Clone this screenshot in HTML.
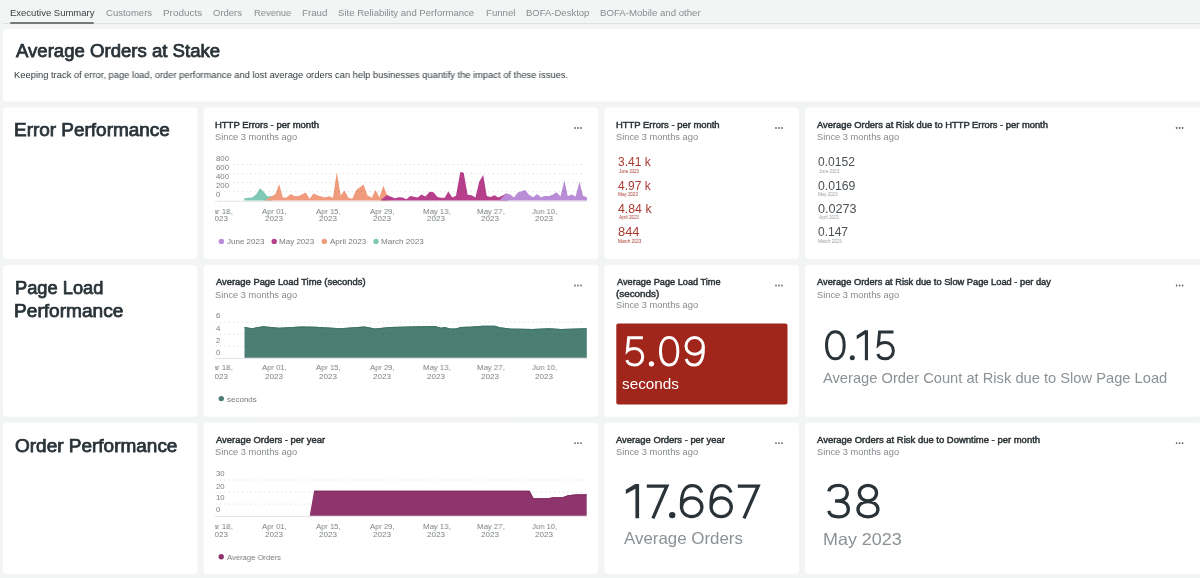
<!DOCTYPE html>
<html><head><meta charset="utf-8"><style>
html,body{margin:0;padding:0;}
body{width:1200px;height:578px;overflow:hidden;position:relative;background:#f3f4f4;font-family:"Liberation Sans",sans-serif;}
.c{position:absolute;background:#fff;border-radius:4px;}
.t{position:absolute;white-space:nowrap;line-height:1;transform-origin:0 0;will-change:transform;}
.tabline{position:absolute;left:3px;top:23px;width:1197px;height:1px;background:#dde0e1;}
.tabul{position:absolute;left:10.3px;top:22px;width:83.7px;height:2px;background:#75797c;border-radius:1px;}
svg{position:absolute;left:0;top:0;}
</style></head><body>
<div class="tabline"></div><div class="tabul"></div>
<svg width="1200" height="578" viewBox="0 0 1200 578"><rect x="3" y="29" width="1198.00" height="72.40" rx="4" fill="#fff"/><rect x="3" y="107.6" width="194.30" height="151.50" rx="4" fill="#fff"/><rect x="203.5" y="107.6" width="394.80" height="151.50" rx="4" fill="#fff"/><rect x="604.3" y="107.6" width="194.50" height="151.50" rx="4" fill="#fff"/><rect x="805" y="107.6" width="396.00" height="151.50" rx="4" fill="#fff"/><rect x="3" y="265" width="194.30" height="151.70" rx="4" fill="#fff"/><rect x="203.5" y="265" width="394.80" height="151.70" rx="4" fill="#fff"/><rect x="604.3" y="265" width="194.50" height="151.70" rx="4" fill="#fff"/><rect x="805" y="265" width="396.00" height="151.70" rx="4" fill="#fff"/><rect x="3" y="422.6" width="194.30" height="151.30" rx="4" fill="#fff"/><rect x="203.5" y="422.6" width="394.80" height="151.30" rx="4" fill="#fff"/><rect x="604.3" y="422.6" width="194.50" height="151.30" rx="4" fill="#fff"/><rect x="805" y="422.6" width="396.00" height="151.30" rx="4" fill="#fff"/></svg>
<svg width="1200" height="578" viewBox="0 0 1200 578">
<rect x="616.3" y="323.6" width="171.2" height="81" rx="2" fill="#a0251b"/>
<line x1="215" y1="201.30" x2="587" y2="201.30" stroke="#e2e4e5" stroke-width="1"/>
<line x1="220.2" y1="205.10000000000002" x2="220.2" y2="206.3" stroke="#e6e8e9" stroke-width="1"/>
<line x1="274.2" y1="205.10000000000002" x2="274.2" y2="206.3" stroke="#e6e8e9" stroke-width="1"/>
<line x1="328.2" y1="205.10000000000002" x2="328.2" y2="206.3" stroke="#e6e8e9" stroke-width="1"/>
<line x1="382.2" y1="205.10000000000002" x2="382.2" y2="206.3" stroke="#e6e8e9" stroke-width="1"/>
<line x1="436.2" y1="205.10000000000002" x2="436.2" y2="206.3" stroke="#e6e8e9" stroke-width="1"/>
<line x1="490.2" y1="205.10000000000002" x2="490.2" y2="206.3" stroke="#e6e8e9" stroke-width="1"/>
<line x1="544.2" y1="205.10000000000002" x2="544.2" y2="206.3" stroke="#e6e8e9" stroke-width="1"/>
<path d="M244.3,200.4 L244.3,198.3 L252.1,197.4 L256,194.4 L260,188.3 L263.4,191.3 L267.2,196.3 L272,196.3 L272,200.4 L272,200.4 L244.3,200.4 Z" fill="#7fc8b6"/>
<path d="M264.7,200.4 L275.5,193.9 L279.1,184 L282.8,197.4 L286.7,197.4 L290.6,193.9 L294.5,196.1 L298.8,196.1 L305.7,192.4 L309.6,198.7 L313.5,193.5 L317.9,195.5 L325.2,197.4 L329.1,196.3 L333,197.8 L336.8,171.9 L340.6,195.2 L344.5,190.6 L348.4,197.8 L352.3,198.7 L356.2,190 L363.5,184.4 L367.4,195.2 L371.8,197.8 L375.5,190 L379.5,197.4 L383.3,185.7 L386.9,194.4 L389.5,200.4 L389.5,200.4 L264.7,200.4 Z" fill="#f19b7d"/>
<path d="M380.4,200.4 L386.9,195 L394.7,198.3 L399,197.2 L402.5,197.6 L406.4,199.3 L410.3,195.9 L417.6,197.6 L421.5,194.4 L425.4,196.5 L429.7,191.8 L433.5,192.2 L437.4,197 L441.2,197.8 L444.7,197.8 L448.3,191.5 L452.3,197.4 L456,195.7 L460.3,171.9 L463.7,172.7 L467.6,194.8 L471.5,195.2 L475.4,197.4 L479.3,181.4 L483.2,175.1 L486.7,196.1 L490.6,197 L494.4,195.2 L498.3,197.4 L502.2,195.7 L506.1,193.5 L508,195 L508,200.4 L508,200.4 L380.4,200.4 Z" fill="#b63e8a"/>
<path d="M499.2,200.4 L506.1,193.5 L510.4,194.4 L513.9,197.4 L517.8,192.6 L525.2,190 L528.9,194.8 L533.2,197.2 L537.1,193.9 L541,197.2 L544.5,196.1 L549.2,196.1 L552.7,194.8 L556.6,192.2 L560.5,196.5 L564.4,180.5 L567.8,196.3 L571.7,194.4 L575.6,196.5 L579.5,181.8 L583,195.7 L586.9,197.2 L586.9,200.4 L586.9,200.4 L499.2,200.4 Z" fill="#ba8cd7"/>
<circle cx="221.4" cy="241.4" r="2.7" fill="#ba8cd7"/>
<circle cx="274.2" cy="241.4" r="2.7" fill="#b63e8a"/>
<circle cx="324.3" cy="241.4" r="2.7" fill="#f19b7d"/>
<circle cx="376" cy="241.4" r="2.7" fill="#7fc8b6"/>
<line x1="215" y1="358.50" x2="587" y2="358.50" stroke="#e2e4e5" stroke-width="1"/>
<line x1="220.2" y1="362.3" x2="220.2" y2="363.5" stroke="#e6e8e9" stroke-width="1"/>
<line x1="274.2" y1="362.3" x2="274.2" y2="363.5" stroke="#e6e8e9" stroke-width="1"/>
<line x1="328.2" y1="362.3" x2="328.2" y2="363.5" stroke="#e6e8e9" stroke-width="1"/>
<line x1="382.2" y1="362.3" x2="382.2" y2="363.5" stroke="#e6e8e9" stroke-width="1"/>
<line x1="436.2" y1="362.3" x2="436.2" y2="363.5" stroke="#e6e8e9" stroke-width="1"/>
<line x1="490.2" y1="362.3" x2="490.2" y2="363.5" stroke="#e6e8e9" stroke-width="1"/>
<line x1="544.2" y1="362.3" x2="544.2" y2="363.5" stroke="#e6e8e9" stroke-width="1"/>
<path d="M244.5,357.8 L244.5,327 L252,328.2 L263.2,326.2 L279,327.8 L301.5,326.5 L315,326.8 L340.5,328.2 L364.5,326.5 L375,328.5 L390,327 L420,326.2 L435,326 L441,327.7 L444.7,327 L450,328.5 L456,328.5 L460.5,327 L472.5,326.5 L483,325.8 L495,325.8 L499.5,327.3 L510,328.5 L532.5,329 L549,328.2 L561,329 L586.8,328.2 L586.8,357.8 L586.8,357.8 L244.5,357.8 Z" fill="#4b7f74"/>
<path d="M244.5,327.5 L252,328.7 L263.2,326.7 L279,328.3 L301.5,327.0 L315,327.3 L340.5,328.7 L364.5,327.0 L375,329.0 L390,327.5 L420,326.7 L435,326.5 L441,328.2 L444.7,327.5 L450,329.0 L456,329.0 L460.5,327.5 L472.5,327.0 L483,326.3 L495,326.3 L499.5,327.8 L510,329.0 L532.5,329.5 L549,328.7 L561,329.5 L586.8,328.7" fill="none" stroke="#3f7366" stroke-width="1.1" stroke-linejoin="round"/>
<circle cx="221.3" cy="398.6" r="2.7" fill="#4a7e73"/>
<line x1="215" y1="516.60" x2="587" y2="516.60" stroke="#e2e4e5" stroke-width="1"/>
<line x1="220.2" y1="520.4" x2="220.2" y2="521.6" stroke="#e6e8e9" stroke-width="1"/>
<line x1="274.2" y1="520.4" x2="274.2" y2="521.6" stroke="#e6e8e9" stroke-width="1"/>
<line x1="328.2" y1="520.4" x2="328.2" y2="521.6" stroke="#e6e8e9" stroke-width="1"/>
<line x1="382.2" y1="520.4" x2="382.2" y2="521.6" stroke="#e6e8e9" stroke-width="1"/>
<line x1="436.2" y1="520.4" x2="436.2" y2="521.6" stroke="#e6e8e9" stroke-width="1"/>
<line x1="490.2" y1="520.4" x2="490.2" y2="521.6" stroke="#e6e8e9" stroke-width="1"/>
<line x1="544.2" y1="520.4" x2="544.2" y2="521.6" stroke="#e6e8e9" stroke-width="1"/>
<path d="M309.7,515.7 L314.1,490.7 L529.3,490.7 L533.3,498.3 L548,498.3 L553.3,497.3 L562.7,497.3 L568,495.3 L576,494.4 L586.7,494.4 L586.7,515.7 L586.7,515.7 L309.7,515.7 Z" fill="#8f356e"/>
<path d="M314.1,491.2 L529.3,491.2 L533.3,498.8 L548,498.8 L553.3,497.8 L562.7,497.8 L568,495.8 L576,494.9 L586.7,494.9" fill="none" stroke="#832a62" stroke-width="1.1" stroke-linejoin="round"/>
<circle cx="221.2" cy="556.8" r="2.7" fill="#8f356e"/>
<rect x="574.25" y="127.10" width="1.5" height="1.8" rx="0.4" fill="#60656a"/>
<rect x="577.25" y="127.10" width="1.5" height="1.8" rx="0.4" fill="#60656a"/>
<rect x="580.25" y="127.10" width="1.5" height="1.8" rx="0.4" fill="#60656a"/>
<rect x="775.25" y="127.10" width="1.5" height="1.8" rx="0.4" fill="#60656a"/>
<rect x="778.25" y="127.10" width="1.5" height="1.8" rx="0.4" fill="#60656a"/>
<rect x="781.25" y="127.10" width="1.5" height="1.8" rx="0.4" fill="#60656a"/>
<rect x="1175.85" y="127.10" width="1.5" height="1.8" rx="0.4" fill="#60656a"/>
<rect x="1178.85" y="127.10" width="1.5" height="1.8" rx="0.4" fill="#60656a"/>
<rect x="1181.85" y="127.10" width="1.5" height="1.8" rx="0.4" fill="#60656a"/>
<rect x="574.25" y="284.60" width="1.5" height="1.8" rx="0.4" fill="#60656a"/>
<rect x="577.25" y="284.60" width="1.5" height="1.8" rx="0.4" fill="#60656a"/>
<rect x="580.25" y="284.60" width="1.5" height="1.8" rx="0.4" fill="#60656a"/>
<rect x="775.25" y="284.60" width="1.5" height="1.8" rx="0.4" fill="#60656a"/>
<rect x="778.25" y="284.60" width="1.5" height="1.8" rx="0.4" fill="#60656a"/>
<rect x="781.25" y="284.60" width="1.5" height="1.8" rx="0.4" fill="#60656a"/>
<rect x="1175.85" y="284.60" width="1.5" height="1.8" rx="0.4" fill="#60656a"/>
<rect x="1178.85" y="284.60" width="1.5" height="1.8" rx="0.4" fill="#60656a"/>
<rect x="1181.85" y="284.60" width="1.5" height="1.8" rx="0.4" fill="#60656a"/>
<rect x="574.25" y="442.30" width="1.5" height="1.8" rx="0.4" fill="#60656a"/>
<rect x="577.25" y="442.30" width="1.5" height="1.8" rx="0.4" fill="#60656a"/>
<rect x="580.25" y="442.30" width="1.5" height="1.8" rx="0.4" fill="#60656a"/>
<rect x="775.25" y="442.30" width="1.5" height="1.8" rx="0.4" fill="#60656a"/>
<rect x="778.25" y="442.30" width="1.5" height="1.8" rx="0.4" fill="#60656a"/>
<rect x="781.25" y="442.30" width="1.5" height="1.8" rx="0.4" fill="#60656a"/>
<rect x="1175.85" y="442.30" width="1.5" height="1.8" rx="0.4" fill="#60656a"/>
<rect x="1178.85" y="442.30" width="1.5" height="1.8" rx="0.4" fill="#60656a"/>
<rect x="1181.85" y="442.30" width="1.5" height="1.8" rx="0.4" fill="#60656a"/>
<line x1="215.4" y1="191.60" x2="585" y2="191.60" stroke="rgba(40,50,55,0.15)" stroke-width="1" stroke-dasharray="1.3 3.1"/>
<line x1="215.4" y1="182.60" x2="585" y2="182.60" stroke="rgba(40,50,55,0.15)" stroke-width="1" stroke-dasharray="1.3 3.1"/>
<line x1="215.4" y1="173.60" x2="585" y2="173.60" stroke="rgba(40,50,55,0.15)" stroke-width="1" stroke-dasharray="1.3 3.1"/>
<line x1="215.4" y1="164.60" x2="585" y2="164.60" stroke="rgba(40,50,55,0.15)" stroke-width="1" stroke-dasharray="1.3 3.1"/>
<line x1="215.4" y1="346.30" x2="585" y2="346.30" stroke="rgba(40,50,55,0.15)" stroke-width="1" stroke-dasharray="1.3 3.1"/>
<line x1="215.4" y1="334.20" x2="585" y2="334.20" stroke="rgba(40,50,55,0.15)" stroke-width="1" stroke-dasharray="1.3 3.1"/>
<line x1="215.4" y1="322.10" x2="585" y2="322.10" stroke="rgba(40,50,55,0.15)" stroke-width="1" stroke-dasharray="1.3 3.1"/>
<line x1="215.4" y1="504.10" x2="585" y2="504.10" stroke="rgba(40,50,55,0.15)" stroke-width="1" stroke-dasharray="1.3 3.1"/>
<line x1="215.4" y1="492.30" x2="585" y2="492.30" stroke="rgba(40,50,55,0.15)" stroke-width="1" stroke-dasharray="1.3 3.1"/>
<line x1="215.4" y1="480.00" x2="585" y2="480.00" stroke="rgba(40,50,55,0.15)" stroke-width="1" stroke-dasharray="1.3 3.1"/>
<path transform="translate(625.30,336.10) scale(0.3032,0.3040)" d="M58,5.5 L11,5.5 L7,48 C12,43 20,41 31,41 C47,41 57.5,53 57.5,68 C57.5,84 46,95 31,95 C18,95 8,89 5,79" fill="none" stroke="#ffffff" stroke-width="3.0" vector-effect="non-scaling-stroke"/>
<circle cx="651.45" cy="363.85" r="2.65" fill="#ffffff"/>
<path transform="translate(659.00,336.10) scale(0.2985,0.3040)" d="M34,5 C52,5 63,22 63,50 C63,78 52,95 34,95 C16,95 5,78 5,50 C5,22 16,5 34,5 Z" fill="none" stroke="#ffffff" stroke-width="3.0" vector-effect="non-scaling-stroke"/>
<path transform="translate(684.50,336.10) scale(0.2942,0.3040) rotate(180 34.5 50)" d="M63.5,25 C59,12 49,5 36,5 C16,5 5,24 5,56 L5,68 M34.5,40.5 C51,40.5 64,52 64,67.5 C64,83 51,95 34.5,95 C18,95 5,83 5,67.5 C5,52 18,40.5 34.5,40.5 Z" fill="none" stroke="#ffffff" stroke-width="3.0" vector-effect="non-scaling-stroke"/>
<path transform="translate(825.00,330.30) scale(0.3044,0.3000)" d="M34,5 C52,5 63,22 63,50 C63,78 52,95 34,95 C16,95 5,78 5,50 C5,22 16,5 34,5 Z" fill="none" stroke="#293338" stroke-width="3.0" vector-effect="non-scaling-stroke"/>
<circle cx="852.30" cy="357.80" r="2.50" fill="#293338"/>
<path transform="translate(856.70,330.30) scale(0.2974,0.3000)" d="M0,17 L27,0 L38,0 L38,100 L27.5,100 L27.5,13.5 L0,29.5 Z" fill="#293338"/>
<path transform="translate(876.30,330.30) scale(0.2968,0.3000)" d="M58,5.5 L11,5.5 L7,48 C12,43 20,41 31,41 C47,41 57.5,53 57.5,68 C57.5,84 46,95 31,95 C18,95 8,89 5,79" fill="none" stroke="#293338" stroke-width="3.0" vector-effect="non-scaling-stroke"/>
<path transform="translate(625.80,484.00) scale(0.3500,0.3430)" d="M0,17 L27,0 L38,0 L38,100 L27.5,100 L27.5,13.5 L0,29.5 Z" fill="#293338"/>
<path transform="translate(646.80,484.00) scale(0.3400,0.3430)" d="M0,6 L59,6 L18,100" fill="none" stroke="#293338" stroke-width="3.3" vector-effect="non-scaling-stroke"/>
<circle cx="672.20" cy="515.10" r="3.20" fill="#293338"/>
<path transform="translate(679.80,484.00) scale(0.3449,0.3430)" d="M63.5,25 C59,12 49,5 36,5 C16,5 5,24 5,56 L5,68 M34.5,40.5 C51,40.5 64,52 64,67.5 C64,83 51,95 34.5,95 C18,95 5,83 5,67.5 C5,52 18,40.5 34.5,40.5 Z" fill="none" stroke="#293338" stroke-width="3.3" vector-effect="non-scaling-stroke"/>
<path transform="translate(709.40,484.00) scale(0.3420,0.3430)" d="M63.5,25 C59,12 49,5 36,5 C16,5 5,24 5,56 L5,68 M34.5,40.5 C51,40.5 64,52 64,67.5 C64,83 51,95 34.5,95 C18,95 5,83 5,67.5 C5,52 18,40.5 34.5,40.5 Z" fill="none" stroke="#293338" stroke-width="3.3" vector-effect="non-scaling-stroke"/>
<path transform="translate(737.80,484.00) scale(0.3446,0.3430)" d="M0,6 L59,6 L18,100" fill="none" stroke="#293338" stroke-width="3.3" vector-effect="non-scaling-stroke"/>
<path transform="translate(827.00,483.70) scale(0.3500,0.3490)" d="M5,22 C8,11 19,5 33,5 C48,5 58,14 58,26.5 C58,40 47,49.5 33,49.5 L23,49.5 M33,49.5 C50,49.5 61,59 61,73 C61,87 49,95 33,95 C17,95 7,88 5,78" fill="none" stroke="#293338" stroke-width="3.3" vector-effect="non-scaling-stroke"/>
<path transform="translate(856.20,483.70) scale(0.3507,0.3490)" d="M33.5,5 C47,5 58,14 58,27 C58,40 47,49 33.5,49 C20,49 9,40 9,27 C9,14 20,5 33.5,5 Z M33.5,51 C50,51 62,61 62,73 C62,86 50,95 33.5,95 C17,95 5,86 5,73 C5,61 17,51 33.5,51 Z" fill="none" stroke="#293338" stroke-width="3.3" vector-effect="non-scaling-stroke"/>
</svg>
<span class="t" style="left:9.54px;top:8.00px;font-size:9.5px;color:#3a4044;">Executive Summary</span>
<span class="t" style="left:105.52px;top:8.00px;font-size:9.5px;color:#878c90;transform:scaleX(1.0039);">Customers</span>
<span class="t" style="left:162.51px;top:8.00px;font-size:9.5px;color:#878c90;transform:scaleX(1.0444);">Products</span>
<span class="t" style="left:213.27px;top:8.00px;font-size:9.5px;color:#878c90;">Orders</span>
<span class="t" style="left:253.56px;top:8.00px;font-size:9.5px;color:#878c90;transform:scaleX(0.9779);">Revenue</span>
<span class="t" style="left:301.52px;top:8.00px;font-size:9.5px;color:#878c90;transform:scaleX(1.0249);">Fraud</span>
<span class="t" style="left:338.27px;top:8.00px;font-size:9.5px;color:#878c90;transform:scaleX(1.0072);">Site Reliability and Performance</span>
<span class="t" style="left:485.53px;top:8.00px;font-size:9.5px;color:#878c90;transform:scaleX(1.0128);">Funnel</span>
<span class="t" style="left:525.54px;top:8.00px;font-size:9.5px;color:#878c90;">BOFA-Desktop</span>
<span class="t" style="left:599.53px;top:8.00px;font-size:9.5px;color:#878c90;transform:scaleX(1.0140);">BOFA-Mobile and other</span>
<span class="t" style="left:15.80px;top:43.00px;font-size:17.6px;color:#293338;transform:scaleX(1.0559);-webkit-text-stroke:0.75px #293338;">Average Orders at Stake</span>
<span class="t" style="left:14.25px;top:70.00px;font-size:9.4px;color:#30373b;transform:scaleX(0.9966);">Keeping track of error, page load, order performance and lost average orders can help businesses quantify the impact of these issues.</span>
<span class="t" style="left:14.38px;top:122.00px;font-size:17.6px;color:#293338;transform:scaleX(1.0767);-webkit-text-stroke:0.75px #293338;">Error Performance</span>
<span class="t" style="left:14.54px;top:280.00px;font-size:17.6px;color:#293338;transform:scaleX(1.0382);-webkit-text-stroke:0.75px #293338;">Page Load</span>
<span class="t" style="left:14.47px;top:303.00px;font-size:17.6px;color:#293338;transform:scaleX(1.0866);-webkit-text-stroke:0.75px #293338;">Performance</span>
<span class="t" style="left:14.75px;top:438.00px;font-size:17.6px;color:#293338;transform:scaleX(1.0787);-webkit-text-stroke:0.75px #293338;">Order Performance</span>
<span class="t" style="left:214.74px;top:121.00px;font-size:8.8px;color:#2c3337;transform:scaleX(1.0766);-webkit-text-stroke:0.45px #2c3337;">HTTP Errors - per month</span>
<span class="t" style="left:215.08px;top:133.00px;font-size:9px;color:#858a8e;transform:scaleX(1.0318);">Since 3 months ago</span>
<span class="t" style="left:616.05px;top:121.00px;font-size:8.8px;color:#2c3337;transform:scaleX(1.0724);-webkit-text-stroke:0.45px #2c3337;">HTTP Errors - per month</span>
<span class="t" style="left:616.38px;top:133.00px;font-size:9px;color:#858a8e;transform:scaleX(1.0318);">Since 3 months ago</span>
<span class="t" style="left:817.30px;top:121.00px;font-size:8.8px;color:#2c3337;transform:scaleX(1.0630);-webkit-text-stroke:0.45px #2c3337;">Average Orders at Risk due to HTTP Errors - per month</span>
<span class="t" style="left:816.88px;top:133.00px;font-size:9px;color:#858a8e;transform:scaleX(1.0318);">Since 3 months ago</span>
<span class="t" style="left:215.50px;top:278.00px;font-size:8.8px;color:#2c3337;transform:scaleX(1.0666);-webkit-text-stroke:0.45px #2c3337;">Average Page Load Time (seconds)</span>
<span class="t" style="left:215.08px;top:291.00px;font-size:9px;color:#858a8e;transform:scaleX(1.0318);">Since 3 months ago</span>
<span class="t" style="left:616.90px;top:278.00px;font-size:8.8px;color:#2c3337;transform:scaleX(1.0452);-webkit-text-stroke:0.45px #2c3337;">Average Page Load Time</span>
<span class="t" style="left:616.31px;top:290.00px;font-size:8.8px;color:#2c3337;transform:scaleX(1.1177);-webkit-text-stroke:0.45px #2c3337;">(seconds)</span>
<span class="t" style="left:616.48px;top:301.00px;font-size:9px;color:#858a8e;transform:scaleX(1.0318);">Since 3 months ago</span>
<span class="t" style="left:817.20px;top:278.00px;font-size:8.8px;color:#2c3337;transform:scaleX(1.0544);-webkit-text-stroke:0.45px #2c3337;">Average Orders at Risk due to Slow Page Load - per day</span>
<span class="t" style="left:816.78px;top:291.00px;font-size:9px;color:#858a8e;transform:scaleX(1.0318);">Since 3 months ago</span>
<span class="t" style="left:215.50px;top:436.00px;font-size:8.8px;color:#2c3337;transform:scaleX(1.0696);-webkit-text-stroke:0.45px #2c3337;">Average Orders - per year</span>
<span class="t" style="left:215.08px;top:448.00px;font-size:9px;color:#858a8e;transform:scaleX(1.0318);">Since 3 months ago</span>
<span class="t" style="left:616.40px;top:436.00px;font-size:8.8px;color:#2c3337;transform:scaleX(1.0667);-webkit-text-stroke:0.45px #2c3337;">Average Orders - per year</span>
<span class="t" style="left:615.98px;top:448.00px;font-size:9px;color:#858a8e;transform:scaleX(1.0318);">Since 3 months ago</span>
<span class="t" style="left:817.20px;top:436.00px;font-size:8.8px;color:#2c3337;transform:scaleX(1.0768);-webkit-text-stroke:0.45px #2c3337;">Average Orders at Risk due to Downtime - per month</span>
<span class="t" style="left:816.78px;top:448.00px;font-size:9px;color:#858a8e;transform:scaleX(1.0318);">Since 3 months ago</span>
<span class="t" style="left:618.12px;top:156.00px;font-size:12px;color:#a93a31;transform:scaleX(0.9901);">3.41 k</span>
<span class="t" style="left:618.54px;top:170.00px;font-size:4.8px;color:#a93a31;transform:scaleX(0.8893);">June 2023</span>
<span class="t" style="left:618.36px;top:180.00px;font-size:12px;color:#a93a31;transform:scaleX(0.9920);">4.97 k</span>
<span class="t" style="left:618.24px;top:193.00px;font-size:4.8px;color:#a93a31;transform:scaleX(0.9416);">May 2023</span>
<span class="t" style="left:618.35px;top:203.00px;font-size:12px;color:#a93a31;transform:scaleX(1.0259);">4.84 k</span>
<span class="t" style="left:618.60px;top:216.00px;font-size:4.8px;color:#a93a31;transform:scaleX(0.9155);">April 2023</span>
<span class="t" style="left:618.02px;top:226.00px;font-size:12px;color:#a93a31;transform:scaleX(1.0744);">844</span>
<span class="t" style="left:618.25px;top:240.00px;font-size:4.8px;color:#a93a31;transform:scaleX(0.9165);">March 2023</span>
<span class="t" style="left:818.22px;top:156.00px;font-size:12px;color:#4a5155;transform:scaleX(1.0045);">0.0152</span>
<span class="t" style="left:818.63px;top:170.00px;font-size:4.8px;color:#9aa0a3;transform:scaleX(0.9029);">June 2023</span>
<span class="t" style="left:818.21px;top:180.00px;font-size:12px;color:#4a5155;transform:scaleX(1.0196);">0.0169</span>
<span class="t" style="left:818.35px;top:193.00px;font-size:4.8px;color:#9aa0a3;transform:scaleX(0.9221);">May 2023</span>
<span class="t" style="left:818.20px;top:203.00px;font-size:12px;color:#4a5155;transform:scaleX(1.0515);">0.0273</span>
<span class="t" style="left:818.70px;top:216.00px;font-size:4.8px;color:#9aa0a3;transform:scaleX(0.9109);">April 2023</span>
<span class="t" style="left:818.23px;top:226.00px;font-size:12px;color:#4a5155;transform:scaleX(0.9855);">0.147</span>
<span class="t" style="left:818.34px;top:240.00px;font-size:4.8px;color:#9aa0a3;transform:scaleX(0.9327);">March 2023</span>
<span class="t" style="left:622.34px;top:377.00px;font-size:14.5px;color:#ffffff;transform:scaleX(1.0552);">seconds</span>
<span class="t" style="left:823.10px;top:371.00px;font-size:14.5px;color:#8b9194;transform:scaleX(1.0129);">Average Order Count at Risk due to Slow Page Load</span>
<span class="t" style="left:624.00px;top:530.00px;font-size:16.5px;color:#8b9194;transform:scaleX(1.0235);">Average Orders</span>
<span class="t" style="left:822.67px;top:531.00px;font-size:16.5px;color:#8b9194;transform:scaleX(1.0858);">May 2023</span>
<span class="t" style="left:216.29px;top:191.00px;font-size:7.8px;color:#7a8084;">0</span>
<span class="t" style="left:216.21px;top:182.00px;font-size:7.8px;color:#7a8084;">200</span>
<span class="t" style="left:216.44px;top:173.00px;font-size:7.8px;color:#7a8084;">400</span>
<span class="t" style="left:216.21px;top:164.00px;font-size:7.8px;color:#7a8084;">600</span>
<span class="t" style="left:216.25px;top:155.00px;font-size:7.8px;color:#7a8084;">800</span>
<span class="t" style="left:206.22px;top:208.00px;font-size:8.0px;color:#7a8084;transform:scaleX(0.9791);">Mar 18,</span>
<span class="t" style="left:210.24px;top:215.00px;font-size:8.0px;color:#7a8084;transform:scaleX(1.0070);">2023</span>
<span class="t" style="left:262.17px;top:208.00px;font-size:8.0px;color:#7a8084;transform:scaleX(0.9564);">Apr 01,</span>
<span class="t" style="left:265.24px;top:215.00px;font-size:8.0px;color:#7a8084;transform:scaleX(1.0070);">2023</span>
<span class="t" style="left:316.17px;top:208.00px;font-size:8.0px;color:#7a8084;transform:scaleX(0.9564);">Apr 15,</span>
<span class="t" style="left:319.24px;top:215.00px;font-size:8.0px;color:#7a8084;transform:scaleX(1.0070);">2023</span>
<span class="t" style="left:370.17px;top:208.00px;font-size:8.0px;color:#7a8084;transform:scaleX(0.9564);">Apr 29,</span>
<span class="t" style="left:373.24px;top:215.00px;font-size:8.0px;color:#7a8084;transform:scaleX(1.0070);">2023</span>
<span class="t" style="left:422.62px;top:208.00px;font-size:8.0px;color:#7a8084;transform:scaleX(0.9759);">May 13,</span>
<span class="t" style="left:427.24px;top:215.00px;font-size:8.0px;color:#7a8084;transform:scaleX(1.0070);">2023</span>
<span class="t" style="left:476.62px;top:208.00px;font-size:8.0px;color:#7a8084;transform:scaleX(0.9759);">May 27,</span>
<span class="t" style="left:481.24px;top:215.00px;font-size:8.0px;color:#7a8084;transform:scaleX(1.0070);">2023</span>
<span class="t" style="left:531.91px;top:208.00px;font-size:8.0px;color:#7a8084;transform:scaleX(0.9593);">Jun 10,</span>
<span class="t" style="left:535.24px;top:215.00px;font-size:8.0px;color:#7a8084;transform:scaleX(1.0070);">2023</span>
<span class="t" style="left:226.88px;top:238.00px;font-size:8px;color:#757b7f;transform:scaleX(0.9940);">June 2023</span>
<span class="t" style="left:279.06px;top:238.00px;font-size:8px;color:#757b7f;transform:scaleX(1.0041);">May 2023</span>
<span class="t" style="left:330.10px;top:238.00px;font-size:8px;color:#757b7f;transform:scaleX(1.0062);">April 2023</span>
<span class="t" style="left:381.15px;top:238.00px;font-size:8px;color:#757b7f;transform:scaleX(1.0126);">March 2023</span>
<span class="t" style="left:216.29px;top:349.00px;font-size:7.8px;color:#7a8084;">0</span>
<span class="t" style="left:216.21px;top:337.00px;font-size:7.8px;color:#7a8084;">2</span>
<span class="t" style="left:216.44px;top:325.00px;font-size:7.8px;color:#7a8084;">4</span>
<span class="t" style="left:216.21px;top:312.00px;font-size:7.8px;color:#7a8084;">6</span>
<span class="t" style="left:206.22px;top:364.00px;font-size:8.0px;color:#7a8084;transform:scaleX(0.9791);">Mar 18,</span>
<span class="t" style="left:210.24px;top:373.00px;font-size:8.0px;color:#7a8084;transform:scaleX(1.0070);">2023</span>
<span class="t" style="left:262.17px;top:364.00px;font-size:8.0px;color:#7a8084;transform:scaleX(0.9564);">Apr 01,</span>
<span class="t" style="left:265.24px;top:373.00px;font-size:8.0px;color:#7a8084;transform:scaleX(1.0070);">2023</span>
<span class="t" style="left:316.17px;top:364.00px;font-size:8.0px;color:#7a8084;transform:scaleX(0.9564);">Apr 15,</span>
<span class="t" style="left:319.24px;top:373.00px;font-size:8.0px;color:#7a8084;transform:scaleX(1.0070);">2023</span>
<span class="t" style="left:370.17px;top:364.00px;font-size:8.0px;color:#7a8084;transform:scaleX(0.9564);">Apr 29,</span>
<span class="t" style="left:373.24px;top:373.00px;font-size:8.0px;color:#7a8084;transform:scaleX(1.0070);">2023</span>
<span class="t" style="left:422.62px;top:364.00px;font-size:8.0px;color:#7a8084;transform:scaleX(0.9759);">May 13,</span>
<span class="t" style="left:427.24px;top:373.00px;font-size:8.0px;color:#7a8084;transform:scaleX(1.0070);">2023</span>
<span class="t" style="left:476.62px;top:364.00px;font-size:8.0px;color:#7a8084;transform:scaleX(0.9759);">May 27,</span>
<span class="t" style="left:481.24px;top:373.00px;font-size:8.0px;color:#7a8084;transform:scaleX(1.0070);">2023</span>
<span class="t" style="left:531.91px;top:364.00px;font-size:8.0px;color:#7a8084;transform:scaleX(0.9593);">Jun 10,</span>
<span class="t" style="left:535.24px;top:373.00px;font-size:8.0px;color:#7a8084;transform:scaleX(1.0070);">2023</span>
<span class="t" style="left:227.06px;top:396.00px;font-size:8px;color:#757b7f;">seconds</span>
<span class="t" style="left:216.29px;top:506.00px;font-size:7.8px;color:#7a8084;">0</span>
<span class="t" style="left:216.01px;top:494.00px;font-size:7.8px;color:#7a8084;">10</span>
<span class="t" style="left:216.21px;top:483.00px;font-size:7.8px;color:#7a8084;">20</span>
<span class="t" style="left:216.29px;top:470.00px;font-size:7.8px;color:#7a8084;">30</span>
<span class="t" style="left:206.22px;top:523.00px;font-size:8.0px;color:#7a8084;transform:scaleX(0.9791);">Mar 18,</span>
<span class="t" style="left:210.24px;top:531.00px;font-size:8.0px;color:#7a8084;transform:scaleX(1.0070);">2023</span>
<span class="t" style="left:262.17px;top:523.00px;font-size:8.0px;color:#7a8084;transform:scaleX(0.9564);">Apr 01,</span>
<span class="t" style="left:265.24px;top:531.00px;font-size:8.0px;color:#7a8084;transform:scaleX(1.0070);">2023</span>
<span class="t" style="left:316.17px;top:523.00px;font-size:8.0px;color:#7a8084;transform:scaleX(0.9564);">Apr 15,</span>
<span class="t" style="left:319.24px;top:531.00px;font-size:8.0px;color:#7a8084;transform:scaleX(1.0070);">2023</span>
<span class="t" style="left:370.17px;top:523.00px;font-size:8.0px;color:#7a8084;transform:scaleX(0.9564);">Apr 29,</span>
<span class="t" style="left:373.24px;top:531.00px;font-size:8.0px;color:#7a8084;transform:scaleX(1.0070);">2023</span>
<span class="t" style="left:422.62px;top:523.00px;font-size:8.0px;color:#7a8084;transform:scaleX(0.9759);">May 13,</span>
<span class="t" style="left:427.24px;top:531.00px;font-size:8.0px;color:#7a8084;transform:scaleX(1.0070);">2023</span>
<span class="t" style="left:476.62px;top:523.00px;font-size:8.0px;color:#7a8084;transform:scaleX(0.9759);">May 27,</span>
<span class="t" style="left:481.24px;top:531.00px;font-size:8.0px;color:#7a8084;transform:scaleX(1.0070);">2023</span>
<span class="t" style="left:531.91px;top:523.00px;font-size:8.0px;color:#7a8084;transform:scaleX(0.9593);">Jun 10,</span>
<span class="t" style="left:535.24px;top:531.00px;font-size:8.0px;color:#7a8084;transform:scaleX(1.0070);">2023</span>
<span class="t" style="left:227.30px;top:554.00px;font-size:8px;color:#757b7f;transform:scaleX(0.9565);">Average Orders</span>
<div style="position:absolute;left:205px;top:206.3px;width:10px;height:18px;background:#fff"></div>
<div style="position:absolute;left:205px;top:363.5px;width:10px;height:18px;background:#fff"></div>
<div style="position:absolute;left:205px;top:521.6px;width:10px;height:18px;background:#fff"></div>
</body></html>
